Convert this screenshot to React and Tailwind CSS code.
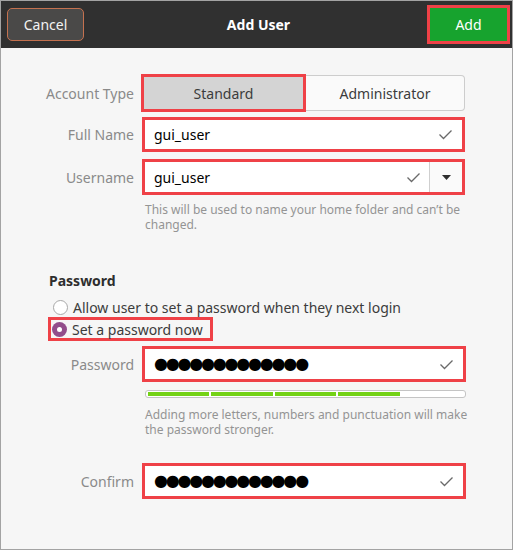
import React from "react";

const Check = () => (
  <svg width="15" height="11" viewBox="0 0 15 11" className="shrink-0">
    <path d="M1.5 5.5 L5.5 9.5 L13.5 1.5" fill="none" stroke="#6a6a6a" strokeWidth="1.3" />
  </svg>
);

const Dots = () => (
  <span className="text-[16px] leading-none text-black tracking-[-2.2px]" style={{ fontFamily: '"DejaVu Sans", sans-serif' }}>
    ●●●●●●●●●●●●●
  </span>
);

const Label = ({ children }) => (
  <div className="w-[90px] shrink-0 flex justify-end whitespace-nowrap text-[14px] text-[#8a8a8a] pr-[4px]">
    {children}
  </div>
);

export default function App() {
  return (
    <div
      className="w-[513px] h-[550px] border border-[#a3a3a3] bg-[#f6f6f6] flex flex-col overflow-hidden"
      style={{ fontFamily: '"Noto Sans", "Open Sans", sans-serif' }}
    >
      {/* Header */}
      <div className="h-[47px] bg-[#303030] grid grid-cols-[1fr_auto_1fr] items-center pl-[6px] pr-[2px] shrink-0">
        <div className="flex">
          <button className="w-[77px] h-[33px] rounded-[5px] border-[1.5px] border-[#c4714f] bg-[#4a4948] text-[#f2f2f2] text-[14px] flex items-center justify-center">
            Cancel
          </button>
        </div>
        <div className="text-white font-bold text-[14px]">Add User</div>
        <div className="flex justify-end">
          <button className="w-[83px] h-[39px] border-[3px] border-[#ef4147] bg-[#17a32e] text-white text-[14px] flex items-center justify-center">
            Add
          </button>
        </div>
      </div>

      {/* Body */}
      <div className="pl-[47px] pt-[26px] flex flex-col">
        {/* Account Type */}
        <div className="flex items-center h-[38px]">
          <Label>Account Type</Label>
          <div className="flex items-center ml-[3px]">
            <div className="w-[165px] h-[38px] border-[3px] border-[#ef4147] bg-[#d4d4d4] flex items-center justify-center text-[14px] text-[#3c3c3c]">
              Standard
            </div>
            <div className="w-[159px] h-[36px] border border-l-0 border-[#cdcdcd] rounded-r-[4px] bg-[#fafafa] flex items-center justify-center text-[14px] text-[#3c3c3c]">
              Administrator
            </div>
          </div>
        </div>

        {/* Full Name */}
        <div className="flex items-center h-[35px] mt-[5px]">
          <Label>Full Name</Label>
          <div className="ml-[4px] w-[323px] h-[35px] border-[3px] border-[#ef4147] bg-white flex items-center pl-[9px] pr-[9px]">
            <span className="flex-1 text-[14px] text-black">gui_user</span>
            <Check />
          </div>
        </div>

        {/* Username */}
        <div className="flex items-center h-[36px] mt-[7px]">
          <Label>Username</Label>
          <div className="ml-[4px] w-[323px] h-[36px] border-[3px] border-[#ef4147] bg-white flex items-center">
            <span className="flex-1 pl-[9px] text-[14px] text-black">gui_user</span>
            <div className="pr-[8px]"><Check /></div>
            <div className="w-[33px] h-full border-l border-[#cfcfcf] flex items-center justify-center bg-[#fafafa]">
              <svg width="9" height="5" viewBox="0 0 9 5"><path d="M0 0 H9 L4.5 5 Z" fill="#2e2e2e" /></svg>
            </div>
          </div>
        </div>

        <div className="ml-[97px] mt-[7px] w-[320px] text-[12px] leading-[15px] text-[#949494]">
          This will be used to name your home folder and can’t be changed.
        </div>

        {/* Password section */}
        <div className="mt-[38px] text-[14px] font-bold text-[#2e2e2e] pl-[1px]">Password</div>

        <div className="mt-[6px] flex items-center h-[20px] pl-[5px]">
          <span className="w-[15px] h-[15px] rounded-full border border-[#a8a8a8] bg-white shrink-0" />
          <span className="ml-[5px] text-[14px] text-[#3c3c3c]">Allow user to set a password when they next login</span>
        </div>
        <div className="w-[165px] h-[24px] border-[3px] border-[#ef4147] flex items-center pl-[1px]">
          <span className="w-[15px] h-[15px] rounded-full bg-[#924d8b] flex items-center justify-center shrink-0">
            <span className="w-[5px] h-[5px] rounded-full bg-white" />
          </span>
          <span className="ml-[5px] text-[14px] text-[#3c3c3c]">Set a password now</span>
        </div>

        {/* Password */}
        <div className="flex items-center h-[36px] mt-[5px]">
          <Label>Password</Label>
          <div className="ml-[4px] w-[324px] h-[36px] border-[3px] border-[#ef4147] bg-white flex items-center pl-[9px] pr-[9px]">
            <span className="flex-1 flex items-center"><Dots /></span>
            <Check />
          </div>
        </div>

        {/* Strength bar */}
        <div className="ml-[97px] mt-[8px] w-[321px] h-[8px] rounded-[3px] border border-[#c4c4c4] bg-white flex gap-[2px] px-[2px] py-[1px]">
          <div className="flex-1 bg-[#73d216]" />
          <div className="flex-1 bg-[#73d216]" />
          <div className="flex-1 bg-[#73d216]" />
          <div className="flex-1 bg-[#73d216]" />
          <div className="flex-1 bg-white" />
        </div>

        <div className="ml-[97px] mt-[9px] w-[330px] text-[12px] leading-[15px] text-[#949494]">
          Adding more letters, numbers and punctuation will make the password stronger.
        </div>

        {/* Confirm */}
        <div className="flex items-center h-[36px] mt-[26px]">
          <Label>Confirm</Label>
          <div className="ml-[4px] w-[324px] h-[36px] border-[3px] border-[#ef4147] bg-white flex items-center pl-[9px] pr-[9px]">
            <span className="flex-1 flex items-center"><Dots /></span>
            <Check />
          </div>
        </div>
      </div>
    </div>
  );
}
